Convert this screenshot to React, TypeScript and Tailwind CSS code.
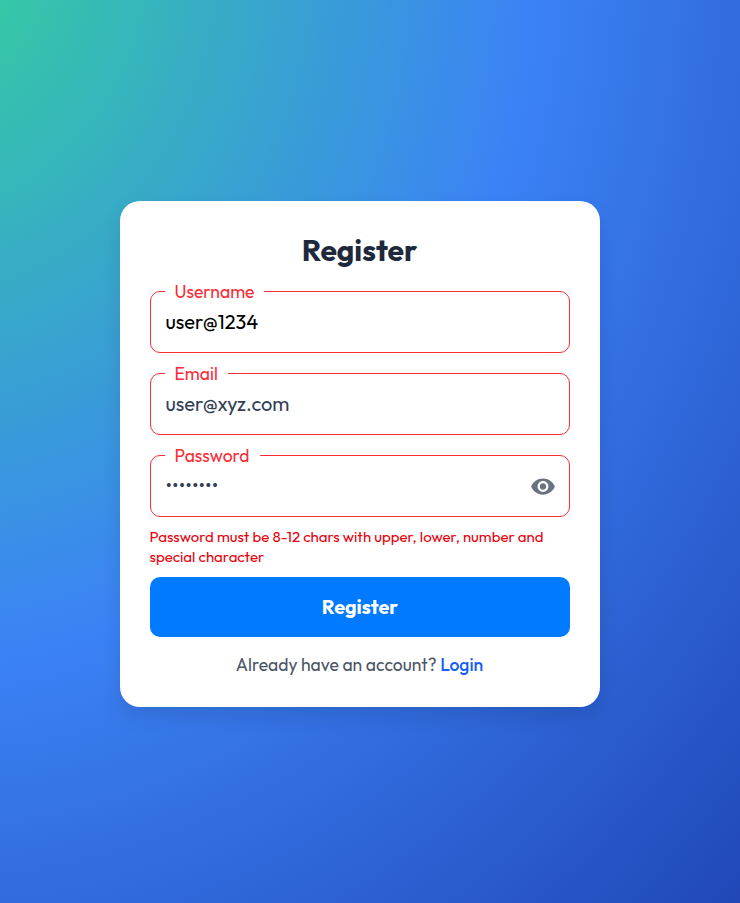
import type { ReactNode } from "react";
import { MdVisibility } from "react-icons/md";

function Field({ label, children }: { label: string; children: ReactNode }) {
  return (
    <fieldset className="-mt-[9px] h-[71px] rounded-[10px] border border-[#fb2c36] px-[14px]">
      <legend className="flex h-[18px] items-center pt-[2px] pr-[10px] pl-[9.5px] text-[17.5px] leading-[18px] whitespace-nowrap text-[#fb2c36]">
        {label}
      </legend>
      <div className="flex h-[43px] items-center justify-between pl-[0.5px] text-xl whitespace-nowrap">{children}</div>
    </fieldset>
  );
}

export default function App() {
  return (
    <div className="flex h-[903px] w-[740px] flex-col items-start bg-[radial-gradient(1224px_1425px_at_-77px_-52px,#34d399,#3b82f6_50%,#1e40af)] pt-[201px] pl-[120px] font-['Outfit',sans-serif]">
      <main className="flex h-[506px] w-[480px] flex-col rounded-[20px] bg-white px-[30px] pt-[29px] shadow-[0_10px_20px_rgba(0,0,0,0.1)]">
        <h1 className="pr-px text-center text-[30px] leading-[40px] font-bold text-[#1e293b]">Register</h1>
        <div className="mt-[21px] flex flex-col gap-5">
          <Field label="Username">
            <span className="text-black">user@1234</span>
          </Field>
          <Field label="Email">
            <span className="text-[#334155]">user@xyz.com</span>
          </Field>
          <Field label="Password">
            <span className="text-[#334155]">••••••••</span>
            <MdVisibility className="-mr-[0.5px] size-[26px] translate-y-[0.5px] text-[#6a7282]" />
          </Field>
        </div>
        <p className="mt-[10px] -ml-[0.5px] text-[15px] leading-[20px] text-[#e7000b]">
          Password must be 8-12 chars with upper, lower, number and
          <br />
          special character
        </p>
        <button className="mt-[10px] h-[60px] shrink-0 rounded-[10px] bg-[#007bff] text-[19.8px] font-bold text-white">
          Register
        </button>
        <p className="mt-[15px] pr-px text-center text-[17.5px] leading-[26px] whitespace-nowrap text-[#4a5565]">
          Already have an account? <a className="font-medium text-[#155dfc]">Login</a>
        </p>
      </main>
    </div>
  );
}
